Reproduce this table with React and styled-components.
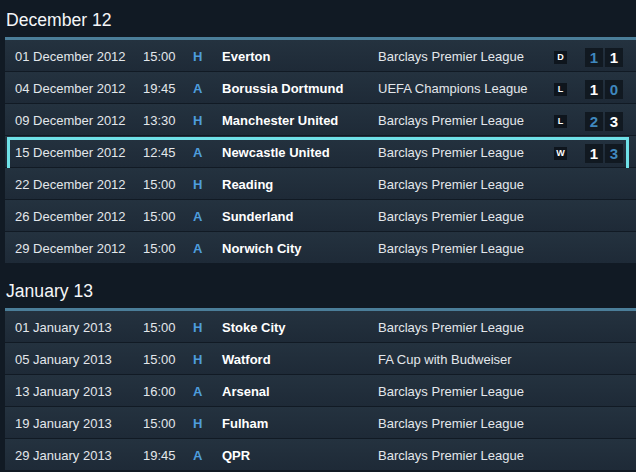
import React from 'react';
import styled, { createGlobalStyle, css } from 'styled-components';

const GlobalStyle = createGlobalStyle`
  html, body {
    margin: 0;
    padding: 0;
    background: #111a24;
  }
  body {
    font-family: "Liberation Sans", Arial, sans-serif;
    color: #e8ebee;
    overflow: hidden;
  }
`

const Page = styled.div`
  width: 636px;
  height: 472px;
  overflow: hidden;
  background: #111a24;
`

const Section = styled.section`
  ${props => props.spaced && css`
    margin-top: 7px;
  `}
`

const MonthTitle = styled.h2`
  margin: 0;
  padding: 9px 0 6px 6px;
  font-size: 17.6px;
  line-height: 22px;
  font-weight: normal;
  color: #f4f6f8;
`

const Table = styled.div`
  margin-left: 5px;
  border-top: 3px solid #4b7e99;
  box-shadow: inset 0 1px 0 #2a4556;
`

const Row = styled.div`
  position: relative;
  display: grid;
  grid-template-columns: 128px 50px 29px 156px 176px 31px 20px 20px;
  align-items: center;
  height: 28px;
  padding: 3px 0 0 10px;
  line-height: 28px;
  font-size: 13px;
  background: linear-gradient(#24323f, #1e2a37);
  border-bottom: 1px solid #111a24;

  ${props => props.current && css`
    &::after {
      content: '';
      position: absolute;
      top: 1px;
      bottom: -5px;
      left: 2px;
      right: 7px;
      border: 3px solid #6fe1e8;
      pointer-events: none;
    }
  `}
`

const Cell = styled.div`
  white-space: nowrap;
  color: #e3e7eb;
`

const Venue = styled.div`
  font-weight: bold;
  color: #4e9ddd;
`

const Opponent = styled.div`
  font-weight: bold;
  color: #ffffff;
  white-space: nowrap;
`

const Outcome = styled.div`
  width: 13px;
  height: 13px;
  line-height: 13px;
  text-align: center;
  font-size: 9px;
  font-weight: bold;
  color: #ffffff;
  background: #0e151d;
`

const Goal = styled.div`
  width: 18px;
  height: 19px;
  line-height: 19px;
  text-align: center;
  font-size: 15px;
  font-weight: bold;
  background: #111921;
  color: ${props => props.ours ? '#3f87bd' : '#ffffff'};
`

const decFixtures = [
  { date: '01 December 2012', time: '15:00', venue: 'H', team: 'Everton', comp: 'Barclays Premier League', res: 'D', score: [1, 1] },
  { date: '04 December 2012', time: '19:45', venue: 'A', team: 'Borussia Dortmund', comp: 'UEFA Champions League', res: 'L', score: [1, 0] },
  { date: '09 December 2012', time: '13:30', venue: 'H', team: 'Manchester United', comp: 'Barclays Premier League', res: 'L', score: [2, 3] },
  { date: '15 December 2012', time: '12:45', venue: 'A', team: 'Newcastle United', comp: 'Barclays Premier League', res: 'W', score: [1, 3], current: true },
  { date: '22 December 2012', time: '15:00', venue: 'H', team: 'Reading', comp: 'Barclays Premier League' },
  { date: '26 December 2012', time: '15:00', venue: 'A', team: 'Sunderland', comp: 'Barclays Premier League' },
  { date: '29 December 2012', time: '15:00', venue: 'A', team: 'Norwich City', comp: 'Barclays Premier League' },
]

const janFixtures = [
  { date: '01 January 2013', time: '15:00', venue: 'H', team: 'Stoke City', comp: 'Barclays Premier League' },
  { date: '05 January 2013', time: '15:00', venue: 'H', team: 'Watford', comp: 'FA Cup with Budweiser' },
  { date: '13 January 2013', time: '16:00', venue: 'A', team: 'Arsenal', comp: 'Barclays Premier League' },
  { date: '19 January 2013', time: '15:00', venue: 'H', team: 'Fulham', comp: 'Barclays Premier League' },
  { date: '29 January 2013', time: '19:45', venue: 'A', team: 'QPR', comp: 'Barclays Premier League' },
]

const FixtureRow = ({ fixture }) => {
  const { date, time, venue, team, comp, res, score, current } = fixture;
  // our goals are the home score when we play at home
  const oursIndex = venue === 'H' ? 0 : 1;
  return (
    <Row current={current}>
      <Cell>{date}</Cell>
      <Cell>{time}</Cell>
      <Venue>{venue}</Venue>
      <Opponent>{team}</Opponent>
      <Cell>{comp}</Cell>
      {res && <Outcome>{res}</Outcome>}
      {score && score.map((g, i) => (
        <Goal key={i} ours={i === oursIndex}>{g}</Goal>
      ))}
    </Row>
  );
}

const Month = ({ title, fixtures, spaced }) => (
  <Section spaced={spaced}>
    <MonthTitle>{title}</MonthTitle>
    <Table>
      {fixtures.map(f => <FixtureRow key={f.date} fixture={f} />)}
    </Table>
  </Section>
)

const App = () => (
  <Page>
    <GlobalStyle />
    <Month title="December 12" fixtures={decFixtures} />
    <Month title="January 13" fixtures={janFixtures} spaced />
  </Page>
)

export default App;
